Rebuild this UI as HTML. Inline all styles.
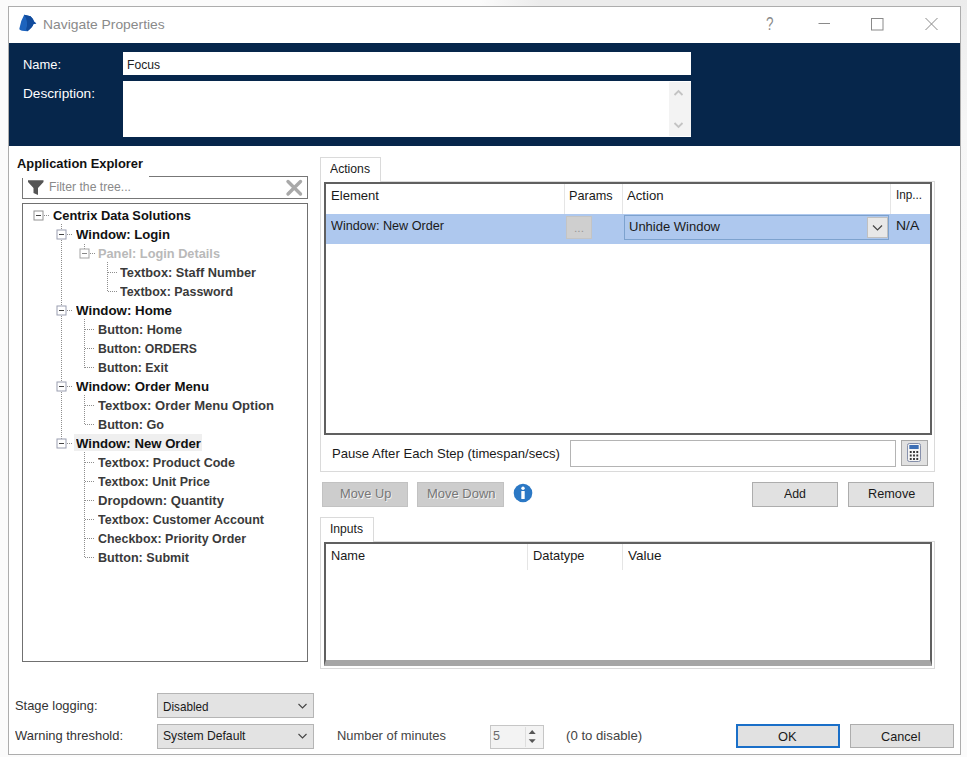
<!DOCTYPE html>
<html lang="en">
<head>
<meta charset="utf-8">
<title>Navigate Properties</title>
<style>
*{box-sizing:border-box;margin:0;padding:0}
html,body{width:967px;height:757px;overflow:hidden;background:#fbfbfb;font-family:"Liberation Sans",sans-serif}
.a{position:absolute}
.t{position:absolute;white-space:pre;transform-origin:0 50%}
#win{left:8px;top:6px;width:953px;height:749px;background:#fff;border:1px solid #adadad}
#hdr{left:9px;top:43px;width:951px;height:103px;background:#06264b}
.inp{background:#fff;border:1px solid #7a7a7a}
.btn{background:#e1e1e1;border:1px solid #adadad}
.btnd{background:#cdcdcd;border:1px solid #c2c2c2}
.sel{background:#e3e3e3;border:1px solid #b5b5b5}
.list{background:#fff;border:2px solid #606060}

</style>
</head>
<body>
<div class="a" id="topstrip" style="left:480px;top:0;width:487px;height:6px;background:linear-gradient(to right,#fbfbfb,#ececec 12%)"></div>
<div class="a" style="left:961px;top:0;width:6px;height:420px;background:linear-gradient(to bottom,#ececec,#f6f6f6 30%,#fbfbfb)"></div>
<div class="a" id="win"></div>
<div class="a" id="hdr"></div>
<!-- title bar icon -->
<svg class="a" style="left:18px;top:14px" width="20" height="19" viewBox="0 0 20 19"><path d="M6.200 0.800 L12.500 2.300 Q15 4.500 16 7.500 L18.300 9.400 L15.500 10 Q14.500 13.500 9.500 17.200 L4 16.800 Q1 16 1.400 14.500 Q2.500 7 6.200 0.800 Z" fill="#1d63bd"/><path d="M6.200 0.800 L12.500 2.300 Q15 4.500 16 7.500 L18.300 9.400 L15.500 10 Q14.500 13.500 9.500 17.200 L8 15.500 Q11 8 6.200 0.800 Z" fill="#114b9c"/></svg>
<!-- caption buttons -->
<svg class="a" style="left:750px;top:8px" width="205" height="34" viewBox="0 0 205 34"><g stroke="#8a8a8a" stroke-width="1" fill="none"><path d="M68.500 15.500 H80"/><rect x="121.500" y="10.500" width="11.500" height="11.500"/><path d="M175.500 10 L187.500 22 M187.500 10 L175.500 22"/></g></svg>
<!-- header fields -->
<div class="a" style="left:123px;top:52px;width:568px;height:23px;background:#fff"></div>
<div class="a" style="left:123px;top:81px;width:568px;height:56px;background:#fff"></div>
<div class="a" style="left:669px;top:82px;width:22px;height:54px;background:#f3f3f3"></div>
<svg class="a" style="left:668px;top:84px" width="20" height="50" viewBox="0 0 20 50"><g stroke="#c4c4c4" stroke-width="1.800" fill="none"><path d="M6.500 11 L10.500 7 L14.500 11"/><path d="M6.500 39 L10.500 43 L14.500 39"/></g></svg>
<!-- Application explorer -->
<div class="a" style="left:22px;top:176px;width:286px;height:23px;background:#fff;border:1px solid #777"></div>
<div class="a" style="left:14px;top:154px;width:135px;height:24px;background:#fff"></div>
<svg class="a" style="left:27px;top:179px" width="18" height="17" viewBox="0 0 18 17"><path d="M1 1.200 H16.500 V3 L11 9 V16 L6.500 14 V9 L1 3 Z" fill="#555"/></svg>
<svg class="a" style="left:284px;top:177px" width="21" height="21" viewBox="0 0 21 21"><path d="M4 4.500 L16.500 17 M16.500 4.500 L4 17" stroke="#a9a9a9" stroke-width="3.400" stroke-linecap="round" fill="none"/></svg>
<div class="a" style="left:22px;top:203px;width:286px;height:459px;background:#fff;border:1px solid #707070"></div>
<div class="a" style="left:74px;top:434px;width:128px;height:17px;background:#efefef"></div>
<!-- tree lines -->
<svg class="a" style="left:0;top:200px" width="320" height="470" viewBox="0 200 320 470">
<g stroke="#8e8e8e" stroke-width="1" stroke-dasharray="1 1" fill="none">
<path d="M61.500 224 V443"/>
<path d="M44 215.500 H49"/>
<path d="M67 234.5 H72"/>
<path d="M84.500 244 V249"/>
<path d="M90 253.5 H95"/>
<path d="M107.500 262 V292"/>
<path d="M108 272.5 H118"/>
<path d="M108 291.5 H118"/>
<path d="M67 310.5 H72"/>
<path d="M84.500 319 V368"/>
<path d="M85 329.5 H95"/>
<path d="M85 348.5 H95"/>
<path d="M85 367.5 H95"/>
<path d="M67 386.5 H72"/>
<path d="M84.500 395 V425"/>
<path d="M85 405.5 H95"/>
<path d="M85 424.5 H95"/>
<path d="M67 443.5 H72"/>
<path d="M84.500 452 V558"/>
<path d="M85 462.5 H95"/>
<path d="M85 481.5 H95"/>
<path d="M85 500.5 H95"/>
<path d="M85 519.5 H95"/>
<path d="M85 538.5 H95"/>
<path d="M85 557.5 H95"/>
</g>
<g fill="none" stroke-width="1"><rect x="34.0" y="211.0" width="9" height="9" fill="#fff" stroke="#929292"/><path d="M36.0 215.5 H41.0" stroke="#444"/><rect x="57.0" y="230.0" width="9" height="9" fill="#fff" stroke="#9a9eb0"/><path d="M59.0 234.5 H64.0" stroke="#444"/><rect x="80.0" y="249.0" width="9" height="9" fill="#fff" stroke="#a5a5a5"/><path d="M82.0 253.5 H87.0" stroke="#888"/><rect x="57.0" y="306.0" width="9" height="9" fill="#fff" stroke="#9a9eb0"/><path d="M59.0 310.5 H64.0" stroke="#444"/><rect x="57.0" y="382.0" width="9" height="9" fill="#fff" stroke="#9a9eb0"/><path d="M59.0 386.5 H64.0" stroke="#444"/><rect x="57.0" y="439.0" width="9" height="9" fill="#fff" stroke="#9a9eb0"/><path d="M59.0 443.5 H64.0" stroke="#444"/></g>
</svg>
<!-- right panel: actions tab -->
<div class="a" style="left:320px;top:181px;width:615px;height:291px;background:#fff;border:1px solid #dadada"></div>
<div class="a" style="left:320px;top:157px;width:61px;height:25px;background:#fff;border:1px solid #dadada;border-bottom:none"></div>
<div class="a list" style="left:324px;top:182px;width:608px;height:253px"></div>
<div class="a" style="left:326px;top:214px;width:604px;height:30px;background:#aec8ee"></div>
<div class="a" style="left:564px;top:184px;width:1px;height:30px;background:#e5e5e5"></div>
<div class="a" style="left:622px;top:184px;width:1px;height:30px;background:#e5e5e5"></div>
<div class="a" style="left:890px;top:184px;width:1px;height:30px;background:#e5e5e5"></div>
<div class="a" style="left:566px;top:216px;width:26px;height:23px;background:#cfcfcf;border:1px solid #c4c4c4"></div>
<div class="a" style="left:624px;top:215px;width:265px;height:25px;border:1px solid #7da2ce;background:#aec8ee"></div>
<div class="a" style="left:867px;top:217px;width:21px;height:21px;background:#e8e8e8;border:1px solid #c0c0c0"></div>
<svg class="a" style="left:867px;top:217px" width="21" height="21" viewBox="0 0 21 21"><path d="M6 8.500 L10.500 13 L15 8.500" stroke="#444" stroke-width="1.200" fill="none"/></svg>
<!-- pause row -->
<div class="a" style="left:570px;top:440px;width:326px;height:27px;background:#fff;border:1px solid #b4b4b4"></div>
<div class="a" style="left:901px;top:440px;width:27px;height:26px;background:#e1e1e1;border:1px solid #a8a8a8"></div>
<svg class="a" style="left:907px;top:443px" width="14" height="19" viewBox="0 0 15 19" preserveAspectRatio="none"><rect x="0.500" y="0.500" width="14" height="18" rx="2" fill="#f4f4f4" stroke="#7f8aa6"/><rect x="2.500" y="2" width="10" height="4" fill="#3d6fb5"/><g fill="#333"><rect x="3" y="8" width="2" height="2"/><rect x="6.500" y="8" width="2" height="2"/><rect x="10" y="8" width="2" height="2"/><rect x="3" y="11.500" width="2" height="2"/><rect x="6.500" y="11.500" width="2" height="2"/><rect x="10" y="11.500" width="2" height="2"/><rect x="3" y="15" width="2" height="2"/><rect x="6.500" y="15" width="2" height="2"/><rect x="10" y="15" width="2" height="2"/></g></svg>
<!-- buttons row -->
<div class="a btnd" style="left:322px;top:482px;width:86px;height:25px"></div>
<div class="a btnd" style="left:417px;top:482px;width:87px;height:25px"></div>
<svg class="a" style="left:513px;top:483px" width="20" height="20" viewBox="0 0 20 20"><circle cx="10" cy="10" r="9.300" fill="#2b78c5"/><circle cx="10" cy="5.200" r="1.700" fill="#fff"/><rect x="8.300" y="8" width="3.400" height="8" rx="0.600" fill="#fff"/></svg>
<div class="a btn" style="left:752px;top:482px;width:86px;height:25px"></div>
<div class="a btn" style="left:848px;top:482px;width:86px;height:25px"></div>
<!-- inputs tab -->
<div class="a" style="left:320px;top:541px;width:615px;height:128px;background:#fff;border:1px solid #dadada"></div>
<div class="a" style="left:320px;top:517px;width:54px;height:25px;background:#fff;border:1px solid #dadada;border-bottom:none"></div>
<div class="a list" style="left:324px;top:542px;width:608px;height:124px;border-bottom:6px solid #a6a6a6"></div>
<div class="a" style="left:527px;top:544px;width:1px;height:26px;background:#e5e5e5"></div>
<div class="a" style="left:622px;top:544px;width:1px;height:26px;background:#e5e5e5"></div>
<!-- bottom row -->
<div class="a sel" style="left:157px;top:693px;width:157px;height:25px"></div>
<div class="a sel" style="left:157px;top:724px;width:157px;height:25px"></div>
<svg class="a" style="left:294px;top:693px" width="20" height="56" viewBox="0 0 20 56"><g stroke="#444" stroke-width="1.100" fill="none"><path d="M4.500 11 L8.500 15 L12.500 11"/><path d="M4.500 41 L8.500 45 L12.500 41"/></g></svg>
<div class="a" style="left:490px;top:725px;width:54px;height:24px;background:#f3f3f3;border:1px solid #c6c6c6"></div>
<div class="a" style="left:525px;top:727px;width:1px;height:20px;background:#dedede"></div>
<svg class="a" style="left:524px;top:726px" width="20" height="22" viewBox="0 0 20 22"><g fill="#555"><path d="M4.700 8 L8.200 4 L11.700 8 Z"/><path d="M4.700 13.300 L8.200 17 L11.700 13.300 Z"/></g></svg>
<div class="a" style="left:736px;top:724px;width:104px;height:24px;background:#e1e1e1;border:2px solid #1a6fc8"></div>
<div class="a btn" style="left:850px;top:724px;width:104px;height:24px"></div>

<div class="t" style="left:43.3px;top:15.8px;font:400 13px/18px 'Liberation Sans', sans-serif;transform:scaleX(1.0659);color:#8a8a8a;">Navigate Properties</div>
<div class="t" style="left:23px;top:55.5px;font:400 12.5px/18px 'Liberation Sans', sans-serif;transform:scaleX(1.0318);color:#ffffff;">Name:</div>
<div class="t" style="left:23px;top:85.0px;font:400 12.5px/18px 'Liberation Sans', sans-serif;transform:scaleX(1.0909);color:#ffffff;">Description:</div>
<div class="t" style="left:127px;top:55.5px;font:400 12.5px/18px 'Liberation Sans', sans-serif;transform:scaleX(0.9693);color:#222;">Focus</div>
<div class="t" style="left:17px;top:155.0px;font:700 13px/18px 'Liberation Sans', sans-serif;transform:scaleX(0.991);color:#111;">Application Explorer</div>
<div class="t" style="left:49px;top:178.0px;font:400 12.5px/18px 'Liberation Sans', sans-serif;transform:scaleX(0.9755);color:#8a8a8a;">Filter the tree...</div>
<div class="t" style="left:330px;top:159.5px;font:400 13.5px/18px 'Liberation Sans', sans-serif;transform:scaleX(0.9033);color:#1a1a1a;">Actions</div>
<div class="t" style="left:331px;top:187.0px;font:400 13.5px/18px 'Liberation Sans', sans-serif;transform:scaleX(0.9691);color:#1a1a1a;">Element</div>
<div class="t" style="left:569px;top:186.5px;font:400 13.5px/18px 'Liberation Sans', sans-serif;transform:scaleX(0.9395);color:#1a1a1a;">Params</div>
<div class="t" style="left:627px;top:186.5px;font:400 13.5px/18px 'Liberation Sans', sans-serif;transform:scaleX(0.9752);color:#1a1a1a;">Action</div>
<div class="t" style="left:895.7px;top:186.0px;font:400 13.5px/18px 'Liberation Sans', sans-serif;transform:scaleX(0.8691);color:#1a1a1a;">Inp...</div>
<div class="t" style="left:331px;top:216.6px;font:400 13.5px/18px 'Liberation Sans', sans-serif;transform:scaleX(0.9355);color:#1a1a1a;">Window: New Order</div>
<div class="t" style="left:574px;top:219.0px;font:400 11px/18px 'Liberation Sans', sans-serif;transform:scaleX(1.0903);color:#999;">...</div>
<div class="t" style="left:629px;top:218.0px;font:400 13.5px/18px 'Liberation Sans', sans-serif;transform:scaleX(0.9625);color:#1a1a1a;">Unhide Window</div>
<div class="t" style="left:895.7px;top:217.0px;font:400 13.5px/18px 'Liberation Sans', sans-serif;transform:scaleX(1.0348);color:#1a1a1a;">N/A</div>
<div class="t" style="left:332px;top:444.5px;font:400 13.5px/18px 'Liberation Sans', sans-serif;transform:scaleX(0.9707);color:#1a1a1a;">Pause After Each Step (timespan/secs)</div>
<div class="t" style="left:339.7px;top:485.0px;font:400 13.5px/18px 'Liberation Sans', sans-serif;transform:scaleX(0.9495);color:#777;text-shadow:1px 1px 0 #f4f4f4;">Move Up</div>
<div class="t" style="left:427px;top:485.0px;font:400 13.5px/18px 'Liberation Sans', sans-serif;transform:scaleX(0.961);color:#777;text-shadow:1px 1px 0 #f4f4f4;">Move Down</div>
<div class="t" style="left:784px;top:485.0px;font:400 13.5px/18px 'Liberation Sans', sans-serif;transform:scaleX(0.9155);color:#1a1a1a;">Add</div>
<div class="t" style="left:867.7px;top:485.0px;font:400 13.5px/18px 'Liberation Sans', sans-serif;transform:scaleX(0.9407);color:#1a1a1a;">Remove</div>
<div class="t" style="left:330px;top:520.0px;font:400 13.5px/18px 'Liberation Sans', sans-serif;transform:scaleX(0.8972);color:#1a1a1a;">Inputs</div>
<div class="t" style="left:331px;top:547.0px;font:400 13.5px/18px 'Liberation Sans', sans-serif;transform:scaleX(0.944);color:#1a1a1a;">Name</div>
<div class="t" style="left:533px;top:547.0px;font:400 13.5px/18px 'Liberation Sans', sans-serif;transform:scaleX(0.9529);color:#1a1a1a;">Datatype</div>
<div class="t" style="left:628px;top:547.0px;font:400 13.5px/18px 'Liberation Sans', sans-serif;transform:scaleX(1.0021);color:#1a1a1a;">Value</div>
<div class="t" style="left:15px;top:697.0px;font:400 13.5px/18px 'Liberation Sans', sans-serif;transform:scaleX(0.9557);color:#333;">Stage logging:</div>
<div class="t" style="left:15px;top:726.5px;font:400 13.5px/18px 'Liberation Sans', sans-serif;transform:scaleX(0.9573);color:#333;">Warning threshold:</div>
<div class="t" style="left:162.5px;top:697.5px;font:400 13.5px/18px 'Liberation Sans', sans-serif;transform:scaleX(0.8662);color:#1a1a1a;">Disabled</div>
<div class="t" style="left:162.5px;top:727.0px;font:400 13.5px/18px 'Liberation Sans', sans-serif;transform:scaleX(0.9012);color:#1a1a1a;">System Default</div>
<div class="t" style="left:337px;top:726.5px;font:400 13.5px/18px 'Liberation Sans', sans-serif;transform:scaleX(0.9557);color:#444;">Number of minutes</div>
<div class="t" style="left:493px;top:726.5px;font:400 13.5px/18px 'Liberation Sans', sans-serif;transform:scaleX(0.9314);color:#6a6a6a;">5</div>
<div class="t" style="left:565.6px;top:726.5px;font:400 13.5px/18px 'Liberation Sans', sans-serif;transform:scaleX(0.9763);color:#444;">(0 to disable)</div>
<div class="t" style="left:778px;top:727.5px;font:400 13.5px/18px 'Liberation Sans', sans-serif;transform:scaleX(0.9531);color:#1a1a1a;">OK</div>
<div class="t" style="left:881px;top:727.5px;font:400 13.5px/18px 'Liberation Sans', sans-serif;transform:scaleX(0.9398);color:#1a1a1a;">Cancel</div>
<div class="t" style="left:53px;top:206.5px;font:700 13px/18px 'Liberation Sans', sans-serif;transform:scaleX(0.9898);color:#111;">Centrix Data Solutions</div>
<div class="t" style="left:76px;top:225.5px;font:700 13px/18px 'Liberation Sans', sans-serif;transform:scaleX(1.0104);color:#111;">Window: Login</div>
<div class="t" style="left:98px;top:244.5px;font:700 13px/18px 'Liberation Sans', sans-serif;transform:scaleX(0.9819);color:#b9b9b9;">Panel: Login Details</div>
<div class="t" style="left:120px;top:263.5px;font:700 13px/18px 'Liberation Sans', sans-serif;transform:scaleX(0.9824);color:#3a3a3a;">Textbox: Staff Number</div>
<div class="t" style="left:120px;top:282.5px;font:700 13px/18px 'Liberation Sans', sans-serif;transform:scaleX(0.9557);color:#3a3a3a;">Textbox: Password</div>
<div class="t" style="left:76px;top:301.5px;font:700 13px/18px 'Liberation Sans', sans-serif;transform:scaleX(1.0238);color:#111;">Window: Home</div>
<div class="t" style="left:98px;top:320.5px;font:700 13px/18px 'Liberation Sans', sans-serif;transform:scaleX(0.9775);color:#3a3a3a;">Button: Home</div>
<div class="t" style="left:98px;top:339.5px;font:700 13px/18px 'Liberation Sans', sans-serif;transform:scaleX(0.9389);color:#3a3a3a;">Button: ORDERS</div>
<div class="t" style="left:98px;top:358.5px;font:700 13px/18px 'Liberation Sans', sans-serif;transform:scaleX(0.9504);color:#3a3a3a;">Button: Exit</div>
<div class="t" style="left:76px;top:377.5px;font:700 13px/18px 'Liberation Sans', sans-serif;transform:scaleX(1.0183);color:#111;">Window: Order Menu</div>
<div class="t" style="left:98px;top:396.5px;font:700 13px/18px 'Liberation Sans', sans-serif;transform:scaleX(1.0042);color:#3a3a3a;">Textbox: Order Menu Option</div>
<div class="t" style="left:98px;top:415.5px;font:700 13px/18px 'Liberation Sans', sans-serif;transform:scaleX(0.9724);color:#3a3a3a;">Button: Go</div>
<div class="t" style="left:76px;top:434.5px;font:700 13px/18px 'Liberation Sans', sans-serif;transform:scaleX(1.013);color:#111;">Window: New Order</div>
<div class="t" style="left:98px;top:453.5px;font:700 13px/18px 'Liberation Sans', sans-serif;transform:scaleX(0.9645);color:#3a3a3a;">Textbox: Product Code</div>
<div class="t" style="left:98px;top:472.5px;font:700 13px/18px 'Liberation Sans', sans-serif;transform:scaleX(0.9531);color:#3a3a3a;">Textbox: Unit Price</div>
<div class="t" style="left:98px;top:491.5px;font:700 13px/18px 'Liberation Sans', sans-serif;transform:scaleX(1.0085);color:#3a3a3a;">Dropdown: Quantity</div>
<div class="t" style="left:98px;top:510.5px;font:700 13px/18px 'Liberation Sans', sans-serif;transform:scaleX(0.9616);color:#3a3a3a;">Textbox: Customer Account</div>
<div class="t" style="left:98px;top:529.5px;font:700 13px/18px 'Liberation Sans', sans-serif;transform:scaleX(0.9573);color:#3a3a3a;">Checkbox: Priority Order</div>
<div class="t" style="left:98px;top:548.5px;font:700 13px/18px 'Liberation Sans', sans-serif;transform:scaleX(0.9694);color:#3a3a3a;">Button: Submit</div>
<div class="t" style="left:765.5px;top:14.5px;font:400 18px/18px 'Liberation Sans', sans-serif;transform:scaleX(0.7488);color:#8a8a8a;">?</div>
</body>
</html>
